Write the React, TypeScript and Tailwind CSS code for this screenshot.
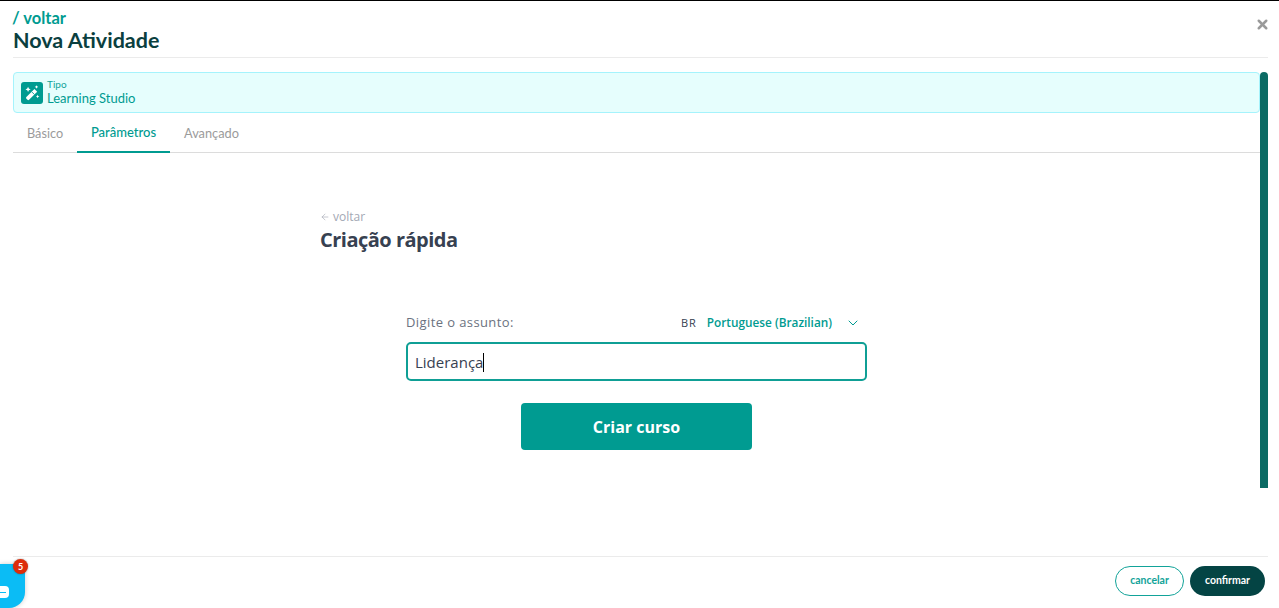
import { X, ChevronDown, ArrowLeft } from "lucide-react";

function WandIcon() {
  return (
    <svg viewBox="0 0 16 16" className="h-[18px] w-[18px]" fill="white">
      <path d="M3 11.600 10.200 4.400l2.400 2.400-7.200 7.200a1 1 0 0 1-1.400 0L3 13a1 1 0 0 1 0-1.400z" />
      <path d="M8 7.200l2.200 2.200" stroke="#009b91" strokeWidth="0.8" />
      <path d="M4.500 2.500l.7 1.600 1.600.7-1.600.7-.7 1.600-.7-1.600-1.600-.7 1.600-.7z" />
      <path d="M12 1l.5 1.100 1.100.5-1.100.5-.5 1.100-.5-1.100-1.100-.5 1.100-.5z" />
      <path d="M13 9.500l.5 1.100 1.100.5-1.100.5-.5 1.100-.5-1.100-1.100-.5 1.100-.5z" />
    </svg>
  );
}

export default function App() {
  return (
    <div className="relative h-[608px] w-full overflow-hidden border-t border-black bg-white font-['Lato','Noto_Sans',sans-serif]">
      <header className="mr-[11px] ml-[13px] flex h-[57px] items-start justify-between border-b border-[#ebebeb] pt-[9px]">
        <div className="flex flex-col">
          <span className="-ml-px text-[16.5px] leading-[17px] font-bold text-[#009b91]">/ voltar</span>
          <span className="text-[21.500px] leading-[26px] font-bold text-[#0b3f3f]">Nova Atividade</span>
        </div>
        <X className="mt-[7px] -mr-[2px] h-[15px] w-[15px] text-[#9a9a9a]" strokeWidth={4} />
      </header>

      <div className="mt-[14px] mr-[11px] ml-[13px] flex">
        <div className="w-[1247px] flex-none">
          <div className="flex h-[41px] items-center gap-[4px] rounded-[4px] border border-[#a5f3fc] bg-[#e6fefd] px-[7px]">
            <span className="flex h-[22px] w-[22px] items-center justify-center rounded-[3px] bg-[#009b91]">
              <WandIcon />
            </span>
            <div className="flex flex-col">
              <span className="text-[10px] leading-[11px] text-[#12a399]">Tipo</span>
              <span className="text-[13px] leading-[16px] text-[#009b91]">Learning Studio</span>
            </div>
          </div>

          <nav className="flex h-[40px] border-b border-[#dcdcdc]">
            <span className="flex h-[40px] w-[64px] items-start pt-[11px] pl-[14px] text-[12.7px] text-[#9b9b9b]">Básico</span>
            <span className="flex h-[40px] w-[93px] justify-center border-b-2 border-[#009b91] pt-[10px] text-[13px] font-medium text-[#009b91]">Parâmetros</span>
            <span className="flex h-[40px] items-start pt-[11px] pl-[14px] text-[12.8px] text-[#9b9b9b]">Avançado</span>
          </nav>

          <main className="flex flex-col pt-[55px] pl-[307px] font-['Open_Sans','Noto_Sans',sans-serif]">
            <span className="flex items-center gap-[3px] text-[12px] leading-[18px] text-[#a3a8b4]">
              <ArrowLeft className="h-[10px] w-[10px]" strokeWidth={1.5} />
              voltar
            </span>
            <h1 className="text-[20px] leading-[28px] font-bold tracking-[-0.5px] text-[#374151]">Criação rápida</h1>

            <div className="mt-[57px] ml-[86px] flex w-[461px] flex-col">
              <div className="flex h-[24px] items-center">
                <span className="text-[13px] tracking-[0.4px] text-[#6b7280]">Digite o assunto:</span>
                <span className="ml-auto text-[11px] tracking-[1px] text-[#374151]">BR</span>
                <span className="ml-[10px] text-[11.8px] font-semibold text-[#009b91]">Portuguese (Brazilian)</span>
                <ChevronDown className="mr-[6px] ml-[13px] h-[16px] w-[16px] text-[#009b91]" strokeWidth={1.5} />
              </div>
              <div className="mt-[7px] flex h-[39px] items-center rounded-[5px] border-2 border-[#0f9f95] bg-white px-[7px] pt-[1px] text-[15px] text-[#374151]">
                Liderança
                <span className="h-[19px] w-px bg-black" />
              </div>
              <button className="mx-auto mt-[22px] h-[47px] w-[231px] rounded-[4px] bg-[#009b91] text-[16px] font-bold text-white">
                Criar curso
              </button>
            </div>
          </main>
        </div>
        <div className="h-[416px] w-[8px] flex-none rounded-t-[4px] bg-[#0b6b64]" />
      </div>

      <footer className="absolute right-[11px] bottom-0 left-[13px] flex h-[52px] items-center justify-end gap-[6px] border-t border-[#ebebeb] pr-[3px] pb-[3px]">
        <button className="h-[30px] w-[69px] rounded-full border border-[#12a399] text-[10.5px] font-bold text-[#12a399]">cancelar</button>
        <button className="h-[30px] w-[75px] rounded-full bg-[#044444] text-[10.5px] font-bold text-white">confirmar</button>
      </footer>

      <div className="absolute bottom-0 left-0 h-[44px] w-[25px] rounded-tr-[8px] rounded-br-[16px] bg-[#0bbcf5] shadow-[0_0_5px_rgba(0,0,0,0.2)]">
        <span className="absolute top-[22px] left-0 flex h-[12px] w-[9px] flex-col justify-center gap-[2px] rounded-r-[4px] bg-white">
          <span className="h-px w-[6px] bg-[#0bbcf5]" />
        </span>
      </div>
      <span className="absolute top-[558px] left-[13px] flex h-[15px] w-[15px] items-center justify-center rounded-full bg-[#dd2c0a] text-[9px] font-bold text-white shadow-[0_0_2px_rgba(0,0,0,0.4)]">5</span>
    </div>
  );
}
